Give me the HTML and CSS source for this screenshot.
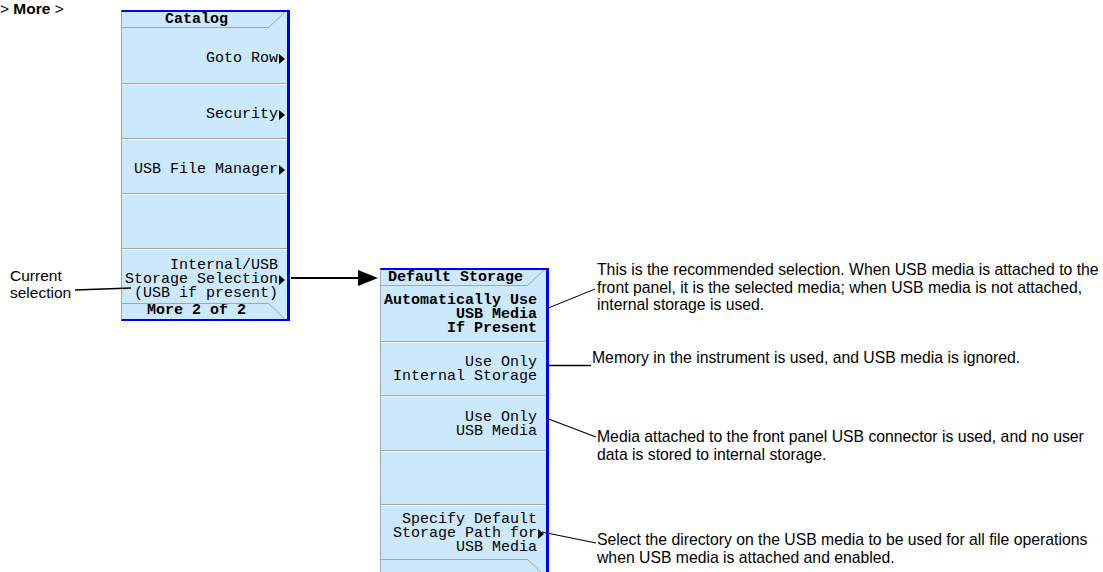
FILE: index.html
```html
<!DOCTYPE html>
<html lang="en">
<head>
<meta charset="utf-8">
<link rel="stylesheet" href="styles.css">
</head>
<body>
<div class="canvas">
    <div class="crumb">&gt; <b>More</b> &gt;</div>

    <!-- first softkey menu -->
    <div class="softkeys catalog">
        <div class="sk-title">Catalog</div>
        <div class="sk-key sub"><span class="sk-label">Goto Row</span><i></i></div>
        <div class="sk-key sub"><span class="sk-label">Security</span><i></i></div>
        <div class="sk-key sub"><span class="sk-label">USB File Manager</span><i></i></div>
        <div class="sk-key"><span class="sk-label"></span><i></i></div>
        <div class="sk-key sub"><span class="sk-label">Internal/USB
Storage Selection
(USB if present)</span><i></i></div>
        <div class="sk-tab">More 2 of 2</div>
    </div>

    <!-- second softkey menu -->
    <div class="softkeys storage">
        <div class="sk-title">Default Storage</div>
        <div class="sk-key on"><span class="sk-label">Automatically Use
USB Media
If Present</span><i></i></div>
        <div class="sk-key"><span class="sk-label">Use Only
Internal Storage</span><i></i></div>
        <div class="sk-key"><span class="sk-label">Use Only
USB Media</span><i></i></div>
        <div class="sk-key"><span class="sk-label"></span><i></i></div>
        <div class="sk-key sub"><span class="sk-label">Specify Default
Storage Path for
USB Media</span><i></i></div>
        <div class="sk-tab"></div>
    </div>

    <div class="note current">Current<br>selection</div>
    <div class="note n1">This is the recommended selection. When USB media is attached to the<br>front panel, it is the selected media; when USB media is not attached,<br>internal storage is used.</div>
    <div class="note n2">Memory in the instrument is used, and USB media is ignored.</div>
    <div class="note n3">Media attached to the front panel USB connector is used, and no user<br>data is stored to internal storage.</div>
    <div class="note n4">Select the directory on the USB media to be used for all file operations<br>when USB media is attached and enabled.</div>

    <!-- leader lines -->
    <svg class="leaders" width="1103" height="572" viewBox="0 0 1103 572" xmlns="http://www.w3.org/2000/svg">
        <g stroke="#000" fill="none">
            <line x1="75" y1="290" x2="131" y2="288" stroke-width="1.6"/>
            <line x1="291" y1="278" x2="362" y2="278" stroke-width="1.8"/>
            <line x1="546" y1="309" x2="595" y2="289" stroke-width="1"/>
            <line x1="548" y1="365.5" x2="591" y2="365.5" stroke-width="1.4"/>
            <line x1="546" y1="418" x2="596" y2="437" stroke-width="1.2"/>
            <line x1="542" y1="532" x2="596" y2="543" stroke-width="1.2"/>
        </g>
        <polygon points="358,270 378,278 358,286" fill="#000"/>
    </svg>
</div>
</body>
</html>
```

FILE: styles.css
```css
body {
    margin: 0;
    background: #fff;
}
.canvas {
    position: relative;
    width: 1103px;
    height: 572px;
    overflow: hidden;
    font-family: "Liberation Sans", Arial, sans-serif;
    color: #000;
}
.crumb {
    position: absolute;
    left: 0;
    top: 0;
    font-size: 15.5px;
    line-height: 17px;
}

/* softkey menus */
.softkeys {
    position: absolute;
    width: 169px;
    box-sizing: border-box;
    background: #cce8fc;
    border-top: 2px solid #0000f0;
    border-right: 3px solid #0000f0;
    border-bottom: 2px solid #0000f0;
    border-left: 1px solid #a4a8ac;
    font-family: "Liberation Mono", "DejaVu Sans Mono", monospace;
    font-size: 15px;
    display: flex;
    flex-direction: column;
}
.catalog {
    left: 121px;
    top: 10px;
}
.storage {
    left: 380px;
    top: 268px;
    border-bottom: none;
}
.sk-title,
.sk-tab {
    position: relative;
    flex: none;
    height: 16px;
    line-height: 16px;
    font-weight: bold;
    text-align: center;
    padding-right: 16px;
    white-space: nowrap;
}
.sk-title::before,
.sk-tab::before {
    content: "";
    position: absolute;
    left: 0;
    right: 18px;
    height: 1px;
    background: #a4a8ac;
}
.sk-title::before {
    bottom: 0;
}
.sk-tab::before {
    top: 0;
}
.sk-title::after,
.sk-tab::after {
    content: "";
    position: absolute;
    top: 0;
    right: 2px;
    width: 17px;
    height: 16px;
}
.sk-title::after {
    background: linear-gradient(to bottom right, transparent calc(50% - 0.8px), #a4a8ac 50%, transparent calc(50% + 0.8px));
}
.sk-tab::after {
    background: linear-gradient(to top right, transparent calc(50% - 0.8px), #a4a8ac 50%, transparent calc(50% + 0.8px));
}
.storage .sk-tab {
    height: 20px;
}
.sk-key {
    flex: none;
    height: 55px;
    box-sizing: border-box;
    display: flex;
    align-items: center;
    justify-content: flex-end;
    padding: 7px 3px 0 0;
}
.storage .sk-key {
    height: 54.5px;
    padding-top: 4px;
}
.sk-key + .sk-key {
    border-top: 1px solid #a4a8ac;
    box-shadow: inset 0 1px 0 #f4faff;
}
.sk-label {
    white-space: pre;
    text-align: right;
    line-height: 14px;
}
.sk-key.on .sk-label {
    font-weight: bold;
}
.sk-key i {
    flex: none;
    width: 6px;
    height: 10px;
    margin-left: 1px;
    margin-right: -1px;
    box-sizing: border-box;
}
.sk-key.sub i {
    border-left: 6px solid #000;
    border-top: 5px solid transparent;
    border-bottom: 5px solid transparent;
}

/* annotations */
.note {
    position: absolute;
    font-size: 15.75px;
    line-height: 17.5px;
    white-space: nowrap;
}
.current {
    left: 10px;
    top: 267px;
    font-size: 15.5px;
    line-height: 17px;
}
.n1 {
    left: 597px;
    top: 261px;
}
.n2 {
    left: 592px;
    top: 349px;
}
.n3 {
    left: 597px;
    top: 428px;
}
.n4 {
    left: 597px;
    top: 531px;
}
.leaders {
    position: absolute;
    left: 0;
    top: 0;
    pointer-events: none;
}
```
